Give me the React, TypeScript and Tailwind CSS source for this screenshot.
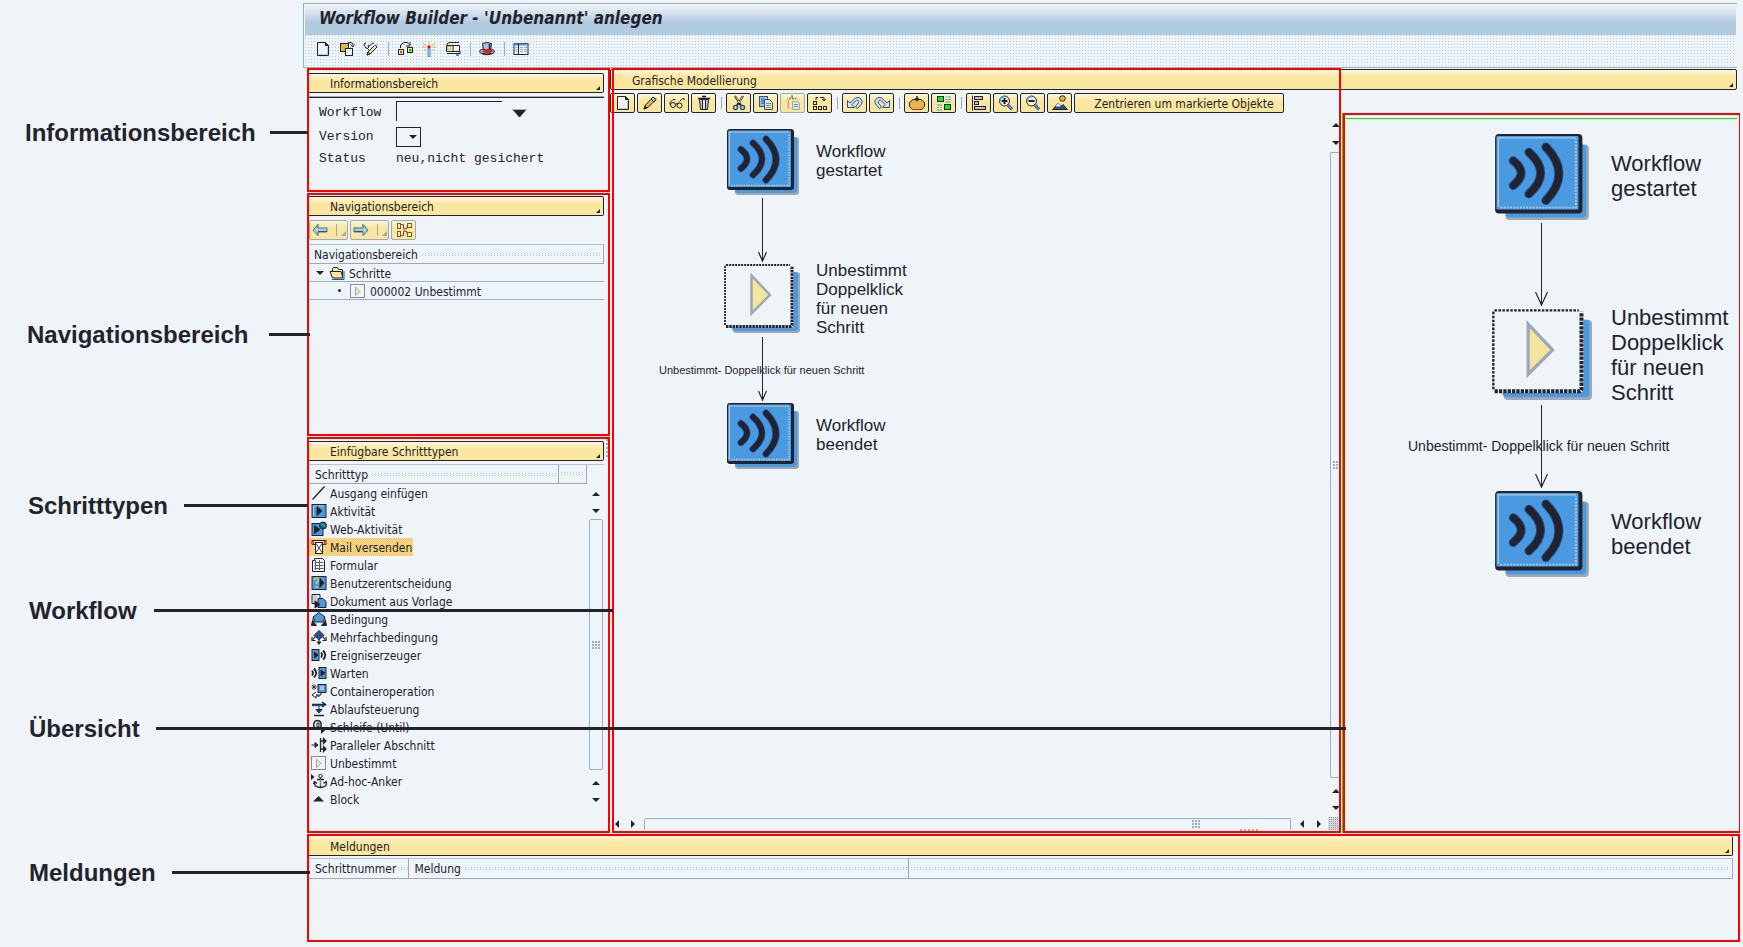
import React from "react";

const K = "#23232d";
const B = "#4a9ae1";
const D = "#2353a0";
const G = "#a0a8b4";
const O = "#e6b44e";

function Icon({ children, size = "size-4" }: { children: React.ReactNode; size?: string }) {
  return (
    <svg viewBox="0 0 16 16" className={`${size} shrink-0`} fill="none" stroke={K} aria-hidden="true">
      {children}
    </svg>
  );
}

const icons: Record<string, React.ReactNode> = {
  page: (
    <>
      <path d="M2.500 1.500h8l3 3v10h-11z" fill="#eff4f9" />
      <path d="M10.500 1.500v3h3z" fill={K} />
      <path d="M4 13.500h8.500V6" stroke="#b0cadf" />
    </>
  ),
  other: (
    <>
      <rect x="1.500" y="2.500" width="8" height="8" fill={O} />
      <rect x="6.500" y="7.500" width="7" height="7" fill="#eff4f9" />
      <path d="M9 1.500h3q2 0 2 3M11.500 3.500l2.500 2.500 1.500-2.500" />
    </>
  ),
  toggle: (
    <>
      <path d="M1 4q0-2 2-2M1 4l2 3q2 1 3-1l-1-2M6 5l4-3h1M4 7l2 2" />
      <path d="M4 14l1-3 7-7 2 2-7 7z" fill="#f9e79f" />
      <path d="M4 14l1-3 2 2z" fill={O} />
      <path d="M11 5l3-2v2" stroke={G} />
    </>
  ),
  test: (
    <>
      <rect x="1.500" y="8.500" width="5" height="5" fill="#f9e79f" />
      <rect x="3" y="10" width="2" height="2" fill="#e33" stroke="none" />
      <rect x="10.500" y="6.500" width="5" height="5" fill="#f9e79f" />
      <rect x="12" y="8" width="2.500" height="2.500" fill="#0c0" stroke="none" />
      <path d="M3.500 7V4L7 1.500h3l2.500 2M13 1v4h-4" />
    </>
  ),
  wand: (
    <>
      <path d="M8 0v3M2 2l3 2.500M14 2l-3 2.500M1 6h4M11 6h4M3 10l2-2M13 10l-2-2" stroke={O} />
      <rect x="6.500" y="4.500" width="3" height="3" fill="red" stroke="none" />
      <rect x="7" y="8" width="2" height="7.500" fill="#b0cadf" stroke={B} />
    </>
  ),
  train: (
    <>
      <path d="M2 4q0-2.500 3-2.500h9" />
      <path d="M1.500 4.500h13v6h-13z" fill="#eff4f9" />
      <rect x="2.500" y="5.500" width="3" height="3" fill="#f9e79f" stroke={O} />
      <path d="M8 5v5M2 12.500h13M15 10v3" />
      <rect x="11" y="13" width="3" height="2" fill={B} stroke="none" />
    </>
  ),
  hat: (
    <>
      <ellipse cx="8" cy="10.500" rx="7.500" ry="3" fill={G} />
      <path d="M4.500 9l-1-6.500q4.500-2 9 0l-1 6.500z" fill="#9cc4e8" />
      <path d="M4.500 8h7l2.500 3-6 1.500-4-1.500z" fill="#d22" stroke="none" />
      <path d="M10.500 3v6" strokeWidth="1.500" />
      <path d="M4 12.500q4 2 8 0" strokeWidth="1.500" />
    </>
  ),
  list: (
    <>
      <rect x="1" y="2.500" width="14" height="11" fill="#eff4f9" />
      <path d="M1 3.500h14" stroke={B} strokeWidth="2" />
      <path d="M5.500 3v10" />
      <path d="M2.500 6.500h2M2.500 8.500h2M2.500 10.500h2M7 6.500h3M11 6.500h3M7 8.500h3M11 8.500h3M7 10.500h3M11 10.500h3" stroke={G} />
    </>
  ),
  pencil: (
    <>
      <path d="M2 14l1.500-4L11 2l3 2.500L6.500 12z" fill={O} />
      <path d="M9 4l2.500 3" stroke="#fff" />
      <path d="M11 2l3 2.500-2 2.500L9 4z" fill="#9cc4e8" />
      <path d="M2 14l1-3 2 2z" fill={K} />
    </>
  ),
  glasses: (
    <>
      <path d="M1 9.500V7.500L4 4.500h2v1M8 9.500q0.500-1.500 2-1.500M10.500 6.500L13.500 3.500H15v1.500" />
      <circle cx="4" cy="10" r="2.500" />
      <circle cx="10.500" cy="10.500" r="2.500" />
      <path d="M6.500 9q1-1 2 0.500" />
    </>
  ),
  trash: (
    <>
      <path d="M3.500 4.500h9l-1 10h-7z" fill="#b9c3cf" />
      <path d="M2 3.500h12M6 1.500h4" strokeWidth="1.500" />
      <path d="M6.500 5v9M9.500 5v9" />
      <path d="M8 5v9" stroke="#fff" />
    </>
  ),
  cut: (
    <>
      <path d="M4 1l6 9.500M12 1L6 10.500" strokeWidth="2.200" />
      <path d="M4.500 1.500l4 6.500M11.500 1.500L8 8" stroke="#f9e79f" strokeWidth="0.900" />
      <circle cx="4.500" cy="12.500" r="2" stroke={D} strokeWidth="1.500" />
      <circle cx="11.500" cy="12.500" r="2" stroke={D} strokeWidth="1.500" />
    </>
  ),
  copy: (
    <>
      <rect x="1.500" y="1.500" width="8" height="10" fill="#9cc4e8" stroke={D} />
      <path d="M6.500 4.500h5l3 3v7h-8z" fill="#f9e79f" stroke={D} />
      <path d="M3 4h3M3 6h3M3 8h3" stroke={D} />
      <path d="M8 8.500h5M8 10.500h5M8 12.500h5" stroke={B} />
    </>
  ),
  paste: (
    <>
      <rect x="2.500" y="3.500" width="10" height="10" fill="#f6e6b8" stroke={O} strokeDasharray="1 1" />
      <path d="M4 3.500h7M6 1.500h3" stroke="#6aa84f" strokeWidth="2" strokeDasharray="2 1" />
      <path d="M7.500 6.500h5l2 2v6h-7z" fill="#dbe8cf" stroke={G} />
      <path d="M9 9.500h4M9 11.500h4" stroke={B} />
      <path d="M3.500 5v8" stroke="#e88" />
    </>
  ),
  flow: (
    <>
      <path d="M4 5V2.500h2M8 2.500h4v3M10 4l2 2 2-2" />
      <rect x="1.500" y="6.500" width="3" height="3" fill="#f9e79f" />
      <rect x="1.500" y="11.500" width="3" height="3" fill="#f9e79f" />
      <rect x="6.500" y="11.500" width="3" height="3" fill="#f9e79f" />
      <rect x="11.500" y="11.500" width="3" height="3" fill="#f9e79f" />
    </>
  ),
  undo: (
    <path
      d="M0.500 12.500v-7L3 8l5.500-5q2.500-1.500 5 0.500 3 3 1 5.500l-4 4.500L8.500 12l3-4q1-1.500-0.500-2.500t-2.500 0.500L5 9.500l2.500 3z"
      fill="#d5e4f3"
      stroke={D}
    />
  ),
  redo: (
    <path
      d="M15.500 12.500v-7L13 8 7.500 3Q5 1.500 2.500 3.500q-3 3-1 5.500l4 4.500L7.500 12l-3-4q-1-1.500 0.500-2.500t2.500 0.500L11 9.500l-2.500 3z"
      fill="#d5e4f3"
      stroke={D}
    />
  ),
  activate: (
    <>
      <path d="M4 4.500h8l3.500 3v4l-3 3h-9l-3-3v-4z" fill={O} />
      <path d="M4 14.500h7" stroke="#d22" />
      <path d="M8 1v5M6 3.500l2 2 2-2" strokeWidth="1.500" />
    </>
  ),
  legend: (
    <>
      <rect x="1.500" y="1.500" width="6" height="5" fill="#00f020" />
      <rect x="8.500" y="9.500" width="6" height="5" fill="#00f020" />
      <path d="M9.500 2h2M12 2h3M9.500 4.500h2M12 4.500h3M9.500 7h5M1 10h5M1 12.500h2M4 12.500h2M1 15h5" stroke={B} />
    </>
  ),
  align: (
    <>
      <path d="M1.500 0.500v15" />
      <rect x="3.500" y="1.500" width="8" height="3" fill="#c9b9d6" />
      <rect x="3.500" y="6.500" width="4" height="3" fill="#c9b9d6" />
      <rect x="3.500" y="11.500" width="11" height="3" fill="#c9b9d6" />
    </>
  ),
  zoomIn: (
    <>
      <path d="M10 10l4 4.500" stroke={D} strokeWidth="3" />
      <path d="M10.500 10.500l3.500 4" stroke="#9cc4e8" />
      <circle cx="6.500" cy="6" r="5" fill="#f4ecd0" />
      <path d="M2 6q0-4 4.500-4.500" stroke={B} strokeWidth="1.500" />
      <path d="M6.500 3v6M3.500 6h6" strokeWidth="2" />
    </>
  ),
  zoomOut: (
    <>
      <path d="M10 10l4 4.500" stroke={D} strokeWidth="3" />
      <path d="M10.500 10.500l3.500 4" stroke="#9cc4e8" />
      <circle cx="6.500" cy="6" r="5" fill="#f4ecd0" />
      <path d="M2 6q0-4 4.500-4.500" stroke={B} strokeWidth="1.500" />
      <path d="M3.500 6h6" strokeWidth="2" />
    </>
  ),
  scene: (
    <>
      <circle cx="10.500" cy="3.500" r="2.800" fill={O} />
      <path d="M0.500 14.500l5.500-6 3 3 2-2 4.500 5z" fill={D} />
      <path d="M4 11l2-2.500 2.500 2.500-1 1-1.500-1-1 1z" fill="#fff" stroke="none" />
    </>
  ),
  hierarchy: (
    <>
      <rect x="1.500" y="1.500" width="3" height="5" fill="#f9e79f" stroke="#7a5b2a" />
      <rect x="1.500" y="9.500" width="3" height="5" fill="#f9e79f" stroke="#7a5b2a" />
      <path d="M5 2.500h2.500v11H5M8 6.500h3V4M8 9.500h3V12" stroke="#a33" />
      <rect x="11.500" y="1.500" width="4" height="4" fill="#f9e79f" stroke="#7a5b2a" />
      <rect x="11.500" y="10.500" width="4" height="4" fill="#f9e79f" stroke="#7a5b2a" />
      <rect x="7" y="6.500" width="3" height="3" fill={G} stroke="none" />
    </>
  ),
  back: (
    <>
      <path d="M1 8l5-5.500V6h9v4H6v3.500z" fill="#b0cadf" stroke="#5a6c9c" />
      <path d="M1 8l5-5.500V6M6 10v3.500" stroke="#3a3" strokeDasharray="2 1" />
      <path d="M6 9.500h9" stroke={D} />
    </>
  ),
  forward: (
    <>
      <path d="M15 8l-5-5.500V6H1v4h9v3.500z" fill="#b0cadf" stroke="#5a6c9c" />
      <path d="M10 6V2.500L15 8l-5 5.500M1 6h4" stroke="#3a3" strokeDasharray="2 1" />
      <path d="M10 9.500H1" stroke={D} />
    </>
  ),
  folder: (
    <>
      <path d="M3.500 13V3.500l1-1h4l1 2h4V13" fill="#f9e79f" />
      <path d="M1 6.500h11l2 6.500H3.500z" fill="#f9e79f" />
      <path d="M3 14.500h12V6" stroke={D} />
    </>
  ),
  line: <path d="M1.500 14.500l12-13" strokeWidth="1.300" />,
  activity: (
    <>
      <rect x="1" y="1.500" width="14" height="13" fill={B} />
      <path d="M2.500 13V3h10" stroke="#b0cadf" />
      <path d="M6 3.500v9L11 8z" fill={K} />
    </>
  ),
  web: (
    <>
      <rect x="1" y="2.500" width="11" height="12" fill={B} />
      <path d="M3.500 4.500v8L9 8.500z" fill={K} />
      <circle cx="12" cy="4.500" r="3.500" fill={D} />
      <path d="M10 3l3 1 1 2" stroke="#2c5" strokeWidth="1.500" />
    </>
  ),
  mail: (
    <>
      <path d="M1 1.500h14v4H1z" fill="#f9e79f" />
      <path d="M2.500 2v3.500M13.500 2v3.500" stroke="#e33" strokeWidth="1.500" />
      <rect x="4.500" y="3.500" width="7" height="11" fill="#eff4f9" />
      <path d="M5 4.500l3 4.500 3-4.500M5 13.500L8 9l3 4.500" strokeWidth="0.800" />
    </>
  ),
  form: (
    <>
      <path d="M1.500 3.500h2v-2h8l2 2v11h-12z" fill="#eff4f9" />
      <path d="M3.500 5.500h9M3.500 8.500h9M3.500 11.500h9M4.500 3v10M8.500 3v10" stroke="#55606e" />
    </>
  ),
  decision: (
    <>
      <rect x="1" y="1.500" width="14" height="13" fill={B} />
      <path d="M3.500 5q0-2 2-2t2 2q0 1.500-2 2.500v1.500M5.500 11v2" stroke="#f0c050" strokeWidth="1.600" />
      <path d="M9 3.500v9l4-4.500z" fill={K} />
    </>
  ),
  doc: (
    <>
      <path d="M1 1.500h8v9H1z" fill="#eff4f9" />
      <path d="M3 2v8M5 2v8" stroke={G} />
      <path d="M7 5.500h5l3 3v6H7z" fill={B} />
      <path d="M4 8v7l5-3.500z" fill={K} />
    </>
  ),
  condition: (
    <>
      <path d="M8 1.500L14 6l-2 5H4L2 6z" fill={B} />
      <path d="M2 7.500v4M14 7.500v4M0.500 14.500h5l-4-5zM15.500 14.500h-5l4-5z" fill={K} />
    </>
  ),
  multi: (
    <>
      <path d="M8 1.500l5 5-5 4-5-4z" fill={D} />
      <path d="M8 10v4M6 12.500l2 2.500 2-2.500M4 8l-2 2.500M12 8l2 2.500M1 8v3.500h3.500M15 8v3.500h-3.500" strokeWidth="1.200" />
    </>
  ),
  event: (
    <>
      <rect x="1" y="2.500" width="7" height="11" fill={B} />
      <path d="M3.500 5v6L7 8z" fill={K} />
      <path d="M10 5.500q2 2.500 0 5M12 3.500q4.500 4.500 0 9" strokeWidth="1.800" />
    </>
  ),
  wait: (
    <>
      <rect x="8" y="2.500" width="7" height="11" fill={B} />
      <path d="M10 5v6l4-3z" fill={K} />
      <path d="M1 5.500q2 2.500 0 5M3 3.500q4.500 4.500 0 9" strokeWidth="1.800" />
    </>
  ),
  container: (
    <>
      <rect x="7" y="1.500" width="8" height="8" fill={B} />
      <path d="M9 4h4M9 6h4" stroke="#eff4f9" />
      <path d="M1 2l4 4M5 2L1 6M3 1v6M0.500 4H6" strokeWidth="0.800" />
      <path d="M10 10v2H5M5 9l-4 3 4 3v-2h4" />
    </>
  ),
  control: (
    <>
      <path d="M1 3.500h13M11 1l3.500 2.500L11 6" strokeWidth="1.500" />
      <path d="M1 4.500h11" stroke={D} strokeWidth="1.500" />
      <path d="M8 5v5M5 8.500h6L8 12z" fill={D} />
      <path d="M3 14.500h10" strokeWidth="1.500" />
    </>
  ),
  loop: (
    <>
      <path d="M5 10q-3-2-2-6 1-2.500 3.500-2.500T10 4v6" strokeWidth="1.500" />
      <path d="M6 4v4h2V4z" />
      <path d="M10 8l4 3.500-4 3.500z" fill={K} stroke="none" />
    </>
  ),
  parallel: (
    <>
      <path d="M0.500 8H7M4 5.500L7 8l-3 2.500z" fill={D} />
      <path d="M9.500 1v14M9 4h6M12.500 1.500L15 4l-2.500 2.500zM9 12h6M12.500 9.500L15 12l-2.500 2.500z" fill={D} strokeWidth="1.300" />
    </>
  ),
  undefined: (
    <>
      <rect x="0.500" y="1.500" width="14" height="13" strokeDasharray="1 1" />
      <path d="M5.500 4v8.500L10 8.500z" fill="#f9e79f" stroke={G} />
    </>
  ),
  anchor: (
    <>
      <path d="M0 1v6l3.500-3z" fill={K} stroke="none" />
      <circle cx="9.500" cy="3" r="1.700" />
      <path d="M9.500 5v9.500M6 6.500h7M3.500 9.500q0 5 6 5t6-5M2.500 11l1-2.500 2.500 2M16 11l-1-2.500-2.500 2" strokeWidth="1.300" />
      <path d="M9.500 6v7" stroke="#b0cadf" strokeWidth="0.600" />
    </>
  ),
  block: <path d="M2 10.500h11L7.500 5z" fill={K} stroke="none" />,
};

const stepTypes: [string, string][] = [
  ["line", "Ausgang einfügen"],
  ["activity", "Aktivität"],
  ["web", "Web-Aktivität"],
  ["mail", "Mail versenden"],
  ["form", "Formular"],
  ["decision", "Benutzerentscheidung"],
  ["doc", "Dokument aus Vorlage"],
  ["condition", "Bedingung"],
  ["multi", "Mehrfachbedingung"],
  ["event", "Ereigniserzeuger"],
  ["wait", "Warten"],
  ["container", "Containeroperation"],
  ["control", "Ablaufsteuerung"],
  ["loop", "Schleife (Until)"],
  ["parallel", "Paralleler Abschnitt"],
  ["undefined", "Unbestimmt"],
  ["anchor", "Ad-hoc-Anker"],
  ["block", "Block"],
];

const callouts = [
  { label: "Informationsbereich", row: "mt-[117px] pl-[25px]", line: "left-[270px] w-[38px]" },
  { label: "Navigationsbereich", row: "mt-[170px] pl-[27px]", line: "left-[269px] w-[41px]" },
  { label: "Schritttypen", row: "mt-[139px] pl-[28px]", line: "left-[184px] w-[124px]" },
  { label: "Workflow", row: "mt-[73px] pl-[29px]", line: "left-[154px] w-[459px]" },
  { label: "Übersicht", row: "mt-[86px] pl-[29px]", line: "left-[156px] w-[1190px]" },
  { label: "Meldungen", row: "mt-[112px] pl-[29px]", line: "left-[172px] w-[138px]" },
];

const yellow = "bg-[linear-gradient(#fdf6dc,#f9e79f_7px)]";

function PanelTitle({ children, className = "pl-[21px]" }: { children: React.ReactNode; className?: string }) {
  return (
    <h2 className={`flex h-5 shrink-0 items-center justify-between rounded-r-xs border-y border-r border-[#23232d] pt-0.5 pr-[3px] text-xs ${yellow} ${className}`}>
      <span>{children}</span>
      <svg viewBox="0 0 4 4" className="mt-2 size-1" aria-hidden="true">
        <path d="M4 0v4H0z" fill={K} />
      </svg>
    </h2>
  );
}

function Arrow({ dir }: { dir: "up" | "down" | "left" | "right" }) {
  const paths = { up: "M4 1l4 4H0z", down: "M0 1h8L4 5z", left: "M5 0v8L1 4z", right: "M1 0v8l4-4z" };
  const vertical = dir === "up" || dir === "down";
  return (
    <svg viewBox={vertical ? "0 0 8 6" : "0 0 6 8"} className={vertical ? "h-1.5 w-2" : "h-2 w-1.5"} aria-hidden="true">
      <path d={paths[dir]} fill={K} />
    </svg>
  );
}

function ScrollButton({ dir, className }: { dir: "up" | "down" | "left" | "right"; className: string }) {
  return (
    <button type="button" aria-label={dir} className={`flex shrink-0 items-center justify-center ${className}`}>
      <Arrow dir={dir} />
    </button>
  );
}

function Grip() {
  return (
    <svg viewBox="0 0 8 8" className="size-2 shrink-0" fill="#9aafc6" aria-hidden="true">
      <path d="M0 0h2v2H0zM3 0h2v2H3zM6 0h2v2H6zM0 3h2v2H0zM3 3h2v2H3zM6 3h2v2H6zM0 6h2v2H0zM3 6h2v2H3zM6 6h2v2H6z" />
    </svg>
  );
}

function ToolButton({ name, muted = false }: { name: string; muted?: boolean }) {
  return (
    <button
      type="button"
      aria-label={name}
      className={`flex h-5 w-[25px] items-center justify-center rounded-xs border ${muted ? "border-[#a0a8b4]" : "border-[#23232d]"} ${yellow}`}
    >
      <Icon>{icons[name]}</Icon>
    </button>
  );
}

function Separator() {
  return (
    <span className="flex h-5 w-1.5 items-center justify-center">
      <span className="h-3 w-px bg-[#a0a8b4]" />
    </span>
  );
}

function HeadDots() {
  return <span className="h-1 flex-1 bg-[linear-gradient(transparent_1px,#eff4f9_1px),linear-gradient(90deg,#a9c8e0_1px,#eff4f9_1px)] bg-[length:3px_2px]" />;
}

function EventNode({ className }: { className: string }) {
  return (
    <svg viewBox="0 0 72 66" className={`absolute ${className}`} aria-hidden="true">
      <rect x="8" y="8" width="64" height="58" rx="3" fill={G} />
      <rect x="8" y="8" width="62" height="56" rx="3" fill={B} />
      <rect x="0" y="0" width="67" height="61" rx="3" fill={K} />
      <rect x="1" y="1.500" width="63" height="56.500" rx="1" fill={B} />
      <path d="M2.500 56V3H62" fill="none" stroke="#b0cadf" />
      <path d="M4 56.500h58V4" fill="none" stroke="#b0cadf" strokeWidth="1.500" strokeDasharray="1.500 1" />
      <path d="M14 20.500q12 9.500 0 19M26 14q18 16 0 32M39 10q20 20.500 0 41" fill="none" stroke={D} strokeWidth="7" strokeLinecap="round" />
      <path d="M14 20.500q12 9.500 0 19M26 14q18 16 0 32M39 10q20 20.500 0 41" fill="none" stroke={K} strokeWidth="5.500" strokeLinecap="round" />
    </svg>
  );
}

function StepNode({ className }: { className: string }) {
  return (
    <svg viewBox="0 0 76 69" className={`absolute ${className}`} aria-hidden="true">
      <rect x="9" y="8" width="67" height="61" rx="3" fill={G} />
      <rect x="8" y="8" width="66" height="59" rx="3" fill={B} />
      <rect x="0.500" y="0.500" width="69" height="63" rx="3" fill="#eff4f9" />
      <path d="M1 61V3q0-2 2-2h63" fill="none" stroke={K} strokeWidth="1.800" strokeDasharray="2 1" />
      <path d="M2 62.500h64q2 0 2-2V2" fill="none" stroke={K} strokeWidth="3" strokeDasharray="2.500 0.800" />
      <path d="M27.500 11.500v38L46 31z" fill="#f3e5a0" stroke={G} strokeWidth="2.500" />
    </svg>
  );
}

function Connector({ className, length, head }: { className: string; length: number; head: number }) {
  const w = head * 2 + 1;
  const c = w / 2;
  return (
    <svg viewBox={`0 0 ${w} ${length}`} className={`absolute ${className}`} fill="none" stroke={K} aria-hidden="true">
      <path d={`M${c} 0V${length}`} />
      <path d={`M0.500 ${length - head * 2 - 2}L${c} ${length - 1}L${w - 0.5} ${length - head * 2 - 2}`} strokeWidth="1.200" />
    </svg>
  );
}

export default function App() {
  return (
    <div className="flex min-h-screen overflow-hidden bg-[#eff4f9] font-['DejaVu_Sans_Condensed','DejaVu_Sans',sans-serif] text-xs text-[#23232d]">
      <aside className="w-[303px] shrink-0">
        {callouts.map((c) => (
          <div key={c.label} className={`relative flex h-8 items-center ${c.row}`}>
            <span className="font-['Liberation_Sans',sans-serif] text-2xl font-bold">{c.label}</span>
            <span className={`absolute top-[14px] z-20 h-[3px] bg-[#23232d] ${c.line}`} />
          </div>
        ))}
      </aside>

      <main className="flex min-w-0 flex-1 flex-col pt-[3px] pr-[3px] pb-[5px]">
        <header className="mr-[3px] h-[65px] shrink-0 border-t border-b border-l border-[#9aafc6] p-px">
          <h1 className="flex h-[30px] items-center bg-[linear-gradient(#eff4f9,#b0cadf_18px)] pb-1 pl-3.5 text-[17px] font-bold italic">
            Workflow Builder - 'Unbenannt' anlegen
          </h1>
          <div className="flex h-[31px] items-center gap-2 bg-[linear-gradient(transparent_1px,#eff4f9_1px),linear-gradient(90deg,#b4cde1_1px,#eff4f9_1px)] bg-[length:3px_3px] pb-1 pl-[10px]">
            {["page", "other", "toggle", "|", "test", "wand", "train", "|", "hat", "|", "list"].map((n, i) =>
              n === "|" ? (
                <span key={i} className="ml-px h-3.5 w-px bg-[#9aafc6]" />
              ) : (
                <button key={i} type="button" aria-label={n}>
                  <Icon>{icons[n]}</Icon>
                </button>
              ),
            )}
          </div>
        </header>

        <div className="ml-1 flex flex-1 gap-0.5">
          <div className="flex w-[303px] shrink-0 flex-col gap-px">
            <section className="h-[124px] border-2 border-[red] pt-[3px] pr-1">
              <PanelTitle>Informationsbereich</PanelTitle>
              <div className="mt-[3px] border-t border-b border-t-[#a0a8b4] border-b-[#23232d]" />
              <div className="grid grid-cols-[77px_1fr] items-start gap-y-0.5 pt-[3px] pl-[10px] font-['Liberation_Mono',monospace] text-[13px] leading-5">
                <label htmlFor="wf" className="leading-6">Workflow</label>
                <div className="flex items-center gap-[10px]">
                  <input id="wf" className="h-5 w-[106px] border-t border-l border-[#23232d] bg-transparent outline-none" />
                  <button type="button" aria-label="Workflow auswählen">
                    <svg viewBox="0 0 15 8" className="mt-1 h-2 w-[15px]">
                      <path d="M0 0h15L8 8H7z" fill={K} />
                      <path d="M0 0.500h15" stroke="#b9a6d0" />
                    </svg>
                  </button>
                </div>
                <label htmlFor="ver">Version</label>
                <div className="relative h-5 w-[25px]">
                  <select id="ver" className="size-full appearance-none border border-[#23232d] bg-transparent outline-none">
                    <option value="" />
                  </select>
                  <span className="pointer-events-none absolute top-[7px] right-1">
                    <Arrow dir="down" />
                  </span>
                </div>
                <span>Status</span>
                <span>neu,nicht gesichert</span>
              </div>
            </section>

            <section className="h-[243px] border-2 border-[red] pt-px pr-1">
              <PanelTitle>Navigationsbereich</PanelTitle>
              <div className="flex gap-0.5 py-1">
                {["back", "forward"].map((n) => (
                  <button key={n} type="button" aria-label={n} className={`flex h-5 w-[39px] items-center rounded-xs border border-[#a0a8b4] pl-0.5 ${yellow}`}>
                    <Icon>{icons[n]}</Icon>
                    <span className="ml-2 h-3 w-px bg-[#a0a8b4]" />
                    <svg viewBox="0 0 5 5" className="mt-1.5 ml-1 size-[5px]" aria-hidden="true">
                      <path d="M5 0v5H0z" fill={G} />
                    </svg>
                  </button>
                ))}
                <ToolButton name="hierarchy" muted />
              </div>
              <div className="flex h-5 items-center gap-1 border-t border-r border-b border-[#a0a8b4] border-t-[#a9c8e0] pt-0.5 pr-0.5 pl-[5px]">
                Navigationsbereich
                <HeadDots />
              </div>
              <ul>
                <li className="flex h-[18px] items-center border-b border-[#9aafc6] pl-[7px]">
                  <Arrow dir="down" />
                  <span className="mr-1 ml-[5px] flex">
                    <Icon>{icons.folder}</Icon>
                  </span>
                  <span className="pt-0.5">Schritte</span>
                </li>
                <li className="flex h-[18px] items-center border-b border-[#9aafc6] pl-[29px]">
                  <span className="mr-[9px] size-[3px] rounded-full bg-[#23232d]" />
                  <Icon>{icons.undefined}</Icon>
                  <span className="pt-0.5 pl-1">000002 Unbestimmt</span>
                </li>
              </ul>
            </section>

            <section className="relative flex-1 border-2 border-[red] pt-0.5 pr-1">
              <span className="absolute top-0 right-0 h-[18px] border-l-2 border-dotted border-[#a0a8b4]" />
              <PanelTitle>Einfügbare Schritttypen</PanelTitle>
              <div className="mt-[3px] flex border-t border-[#a9c8e0]">
                <div className="flex-1">
                  <div className="flex h-[19px] items-center border-r border-b border-[#a0a8b4]">
                    <div className="flex flex-1 items-center gap-1 pt-0.5 pl-1.5">
                      Schritttyp
                      <HeadDots />
                    </div>
                    <div className="flex h-full w-7 items-center border-l border-[#a0a8b4] px-0.5">
                      <HeadDots />
                    </div>
                  </div>
                  <ul>
                    {stepTypes.map(([icon, label]) => (
                      <li key={label} className="flex h-[18px]">
                        <button
                          type="button"
                          className={`flex h-full items-center gap-[3px] pr-px pl-0.5 ${
                            icon === "mail" ? "bg-[conic-gradient(#f0c263_25%,#f9e094_0_50%,#f0c263_0_75%,#f9e094_0)] bg-[length:2px_2px]" : ""
                          }`}
                        >
                          <Icon>{icons[icon]}</Icon>
                          <span className="pt-0.5">{label}</span>
                        </button>
                      </li>
                    ))}
                  </ul>
                </div>
                <div className="mt-5 flex w-[17px] flex-col items-center">
                  <ScrollButton dir="up" className="h-[17px] w-full" />
                  <ScrollButton dir="down" className="h-[17px] w-full" />
                  <div className="flex h-[251px] w-[14px] items-center justify-center rounded-xs border border-[#9aafc6]">
                    <Grip />
                  </div>
                  <ScrollButton dir="up" className="mt-1 h-[17px] w-full" />
                  <ScrollButton dir="down" className="h-[17px] w-full" />
                </div>
              </div>
            </section>
          </div>

          <section className="relative flex min-w-0 flex-1 flex-col">
            <PanelTitle className="mt-px mr-[3px] -ml-0.5 h-[21px]! rounded-l-xs border-l pl-[21px]">Grafische Modellierung</PanelTitle>
            <div className="pointer-events-none absolute inset-y-0 left-0 z-10 w-[729px] border-2 border-[red]" />
            <div className="flex flex-1">
              <div className="flex w-[729px] shrink-0 flex-col">
                <div className="-ml-0.5 flex h-[23px] items-end gap-0.5">
                  <ToolButton name="page" />
                  <ToolButton name="pencil" />
                  <ToolButton name="glasses" />
                  <ToolButton name="trash" />
                  <Separator />
                  <ToolButton name="cut" />
                  <ToolButton name="copy" />
                  <ToolButton name="paste" muted />
                  <ToolButton name="flow" />
                  <Separator />
                  <ToolButton name="undo" />
                  <ToolButton name="redo" />
                  <Separator />
                  <ToolButton name="activate" />
                  <ToolButton name="legend" />
                  <Separator />
                  <ToolButton name="align" />
                  <ToolButton name="zoomIn" />
                  <ToolButton name="zoomOut" />
                  <ToolButton name="scene" />
                  <button type="button" className={`h-5 w-[210px] rounded-xs border border-[#23232d] pt-0.5 pl-2.5 text-xs leading-4 ${yellow}`}>
                    Zentrieren um markierte Objekte
                  </button>
                </div>

                <div className="flex flex-1">
                  <div className="relative flex-1 font-['Liberation_Sans',sans-serif] text-[17px] leading-[19px]">
                    <EventNode className="top-4 left-[115px] h-[66px] w-[72px]" />
                    <Connector className="top-[85px] left-[146px] h-16 w-[9px]" length={64} head={4} />
                    <StepNode className="top-[151px] left-[112px] h-[69px] w-[76px]" />
                    <Connector className="top-[224px] left-[146px] h-16 w-[9px]" length={64} head={4} />
                    <EventNode className="top-[290px] left-[115px] h-[66px] w-[72px]" />
                    <p className="absolute top-[29px] left-[204px]">Workflow<br />gestartet</p>
                    <p className="absolute top-[148px] left-[204px]">Unbestimmt<br />Doppelklick<br />für neuen<br />Schritt</p>
                    <p className="absolute top-[303px] left-[204px]">Workflow<br />beendet</p>
                    <p className="absolute top-[251px] left-[47px] text-[11px] leading-3 whitespace-nowrap">Unbestimmt- Doppelklick für neuen Schritt</p>
                  </div>
                  <div className="flex w-[11px] flex-col pt-[3px]">
                    <ScrollButton dir="up" className="h-[18px]" />
                    <ScrollButton dir="down" className="h-[18px]" />
                    <div className="flex flex-1 items-center rounded-l-xs border-y border-l border-[#9aafc6] pl-0.5">
                      <Grip />
                    </div>
                    <ScrollButton dir="up" className="mt-1 h-[18px]" />
                    <ScrollButton dir="down" className="h-4" />
                  </div>
                </div>

                <div className="relative flex h-[17px] items-center pb-0.5">
                  <span className="absolute right-[83px] bottom-0.5 w-[18px] border-t-2 border-dotted border-[#a0a8b4]" />
                  <ScrollButton dir="left" className="h-3 w-[10px]" />
                  <ScrollButton dir="right" className="ml-1 h-3 w-[14px]" />
                  <div className="mx-[3px] ml-1 flex h-3 flex-1 items-center justify-end rounded-t-xs border-x border-t border-[#9aafc6] pr-[90px]">
                    <Grip />
                  </div>
                  <ScrollButton dir="left" className="h-3 w-[16px]" />
                  <ScrollButton dir="right" className="h-3 w-[18px]" />
                  <span className="mr-0.5 h-[13px] w-[11px] bg-[conic-gradient(#8f99a6_25%,#d5dae0_0)] bg-[length:2px_2px]" />
                </div>
              </div>

              <div className="mt-[23px] ml-px flex flex-1 border-l border-[#00f000]">
                <div className="flex-1 border-2 border-r border-[red] pt-[3px]">
                  <div className="mr-0.5 h-px bg-[#00f000]" />
                  <div className="relative -mt-1 font-['Liberation_Sans',sans-serif] text-[22px] leading-[25px]">
                    <EventNode className="top-[19px] left-[150px] h-[86px] w-[94px]" />
                    <Connector className="top-[108px] left-[190px] h-[83px] w-[13px]" length={83} head={6} />
                    <StepNode className="top-[194px] left-[147px] h-[91px] w-[100px]" />
                    <Connector className="top-[290px] left-[190px] h-[83px] w-[13px]" length={83} head={6} />
                    <EventNode className="top-[376px] left-[150px] h-[86px] w-[94px]" />
                    <p className="absolute top-[36px] left-[266px]">Workflow<br />gestartet</p>
                    <p className="absolute top-[190px] left-[266px]">Unbestimmt<br />Doppelklick<br />für neuen<br />Schritt</p>
                    <p className="absolute top-[394px] left-[266px]">Workflow<br />beendet</p>
                    <p className="absolute top-[323px] left-[63px] text-sm leading-4 whitespace-nowrap">Unbestimmt- Doppelklick für neuen Schritt</p>
                  </div>
                </div>
              </div>
            </div>
          </section>
        </div>

        <section className="mt-px ml-1 h-[108px] shrink-0 border-2 border-[red] pr-[5px]">
          <PanelTitle className="border-t-0 pl-[21px]">Meldungen</PanelTitle>
          <table className="mt-0.5 w-full table-fixed border-collapse">
            <thead>
              <tr className="h-5 border-t border-r border-b border-[#a0a8b4] border-t-[#a9c8e0] text-left">
                <th className="w-[99px] border-r border-[#a0a8b4] p-0 pl-1.5 font-normal">
                  <div className="flex items-center gap-0.5">Schrittnummer<HeadDots /></div>
                </th>
                <th className="w-[500px] border-r border-[#a0a8b4] p-0 pl-1.5 font-normal">
                  <div className="flex items-center gap-1">Meldung<HeadDots /></div>
                </th>
                <th className="p-0 px-0.5"><div className="flex"><HeadDots /></div></th>
              </tr>
            </thead>
          </table>
        </section>
      </main>
    </div>
  );
}
